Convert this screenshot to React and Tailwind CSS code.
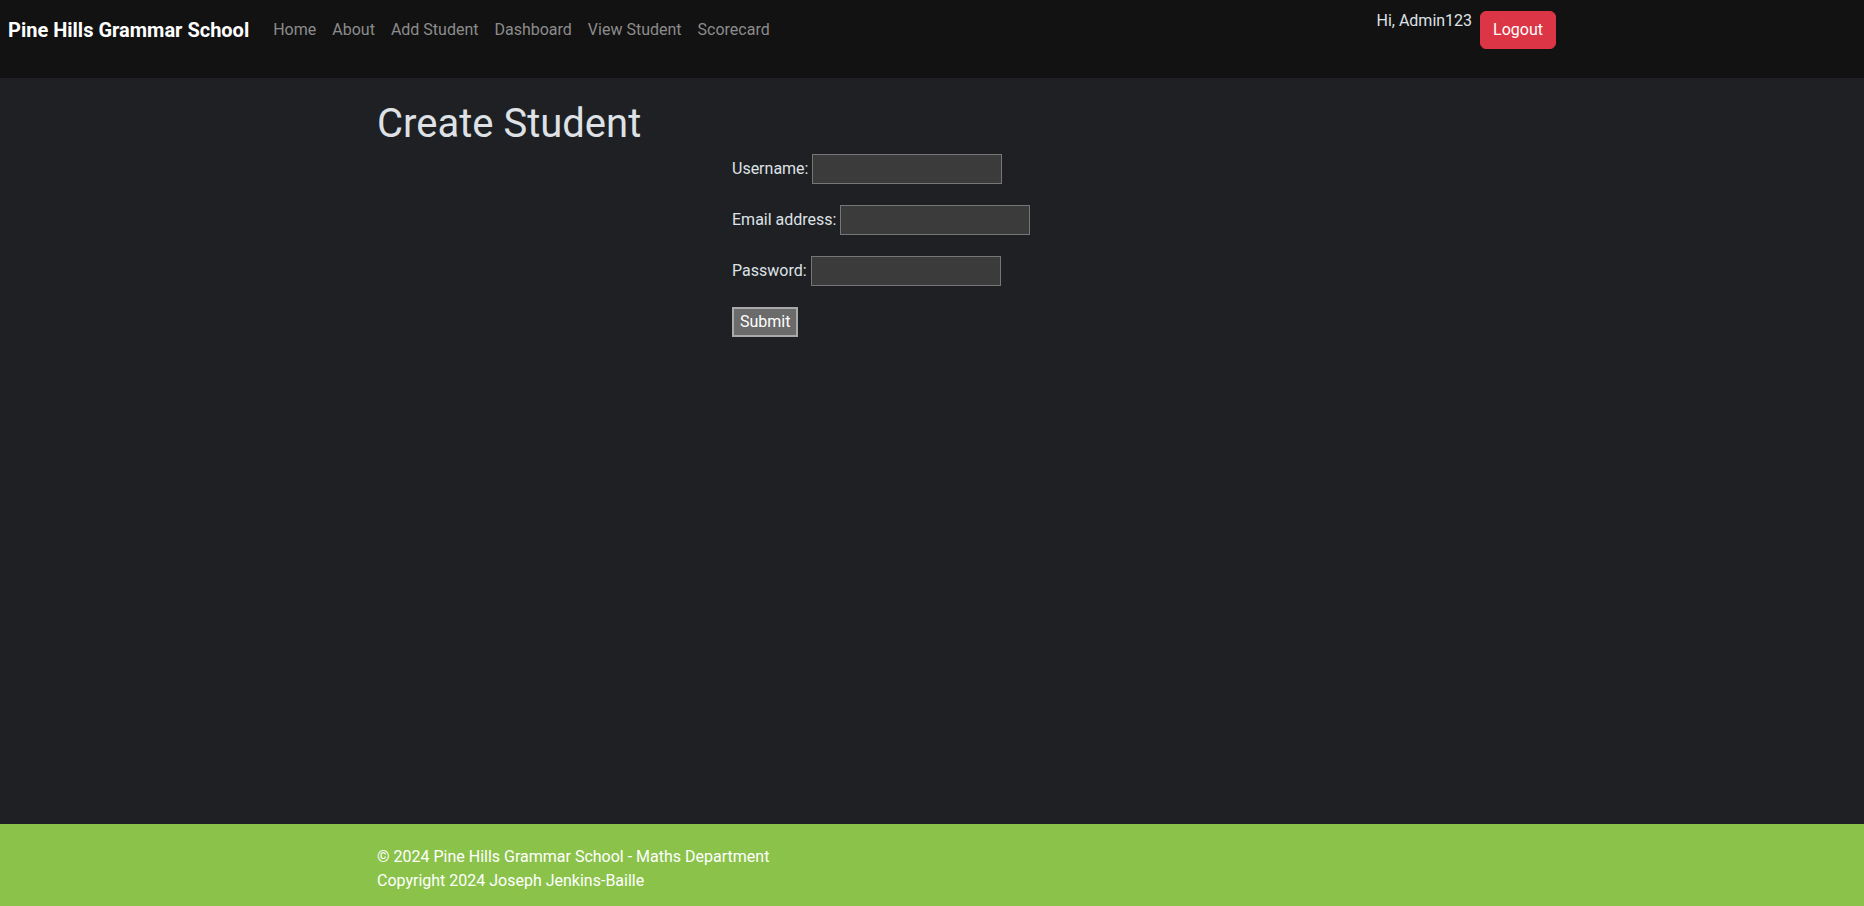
import { useState } from 'react'

const navLinks = ['Home', 'About', 'Add Student', 'Dashboard', 'View Student', 'Scorecard']

const Navbar = () => (
  <nav className="flex h-[78px] items-start justify-between bg-[#121212] px-2 pt-2">
    <div className="mt-[2px] flex items-center">
      <a href="#" className="mr-4 py-[5px] text-[20px] font-bold leading-[30px] text-white">
        Pine Hills Grammar School
      </a>
      <ul className="flex">
        {navLinks.map((l) => (
          <li key={l}>
            <a href="#" className="block px-2 py-2 text-[16px] leading-6 text-[#8c8c8c] hover:text-[#bdbdbd]">
              {l}
            </a>
          </li>
        ))}
      </ul>
    </div>
    <div className="mr-[300px] flex items-start gap-2">
      <span className="mt-[1px] text-[16px] leading-6 text-[#dee2e6]">Hi, Admin123</span>
      <button
        type="button"
        className="mt-[3px] rounded-md border border-[#dc3545] bg-[#dc3545] px-3 py-1.5 text-[16px] leading-6 text-white hover:bg-[#bb2d3b]"
      >
        Logout
      </button>
    </div>
  </nav>
)

const CreateStudent = () => {
  const [form, setForm] = useState({ username: '', email: '', password: '' })

  const update = (k) => (e) => setForm({ ...form, [k]: e.target.value })

  const inputClass =
    'h-[30px] w-[190px] border border-[#767676] bg-[#3b3b3b] px-[3px] text-[16px] leading-6 text-white outline-none'

  return (
    <main className="flex-1">
      <div className="mx-auto max-w-[1140px] px-[15px] pt-[22px]">
        <h1 className="text-[40px] leading-[48px] text-[#dee2e6]">Create Student</h1>
        <div className="flex justify-center">
          <form
            className="flex w-[400px] flex-col items-start gap-[21px] pt-[6px] text-[16px] leading-6 text-[#dee2e6]"
            onSubmit={(e) => e.preventDefault()}
          >
            <div className="flex items-center gap-1">
              <label htmlFor="username">Username:</label>
              <input id="username" type="text" value={form.username} onChange={update('username')} className={inputClass} />
            </div>
            <div className="flex items-center gap-1">
              <label htmlFor="email">Email address:</label>
              <input id="email" type="email" value={form.email} onChange={update('email')} className={inputClass} />
            </div>
            <div className="flex items-center gap-1">
              <label htmlFor="password">Password:</label>
              <input id="password" type="password" value={form.password} onChange={update('password')} className={inputClass} />
            </div>
            <button
              type="submit"
              className="h-[30px] border-2 border-[#a9a9a9] bg-[#6b6b6b] px-[6px] text-[16px] leading-6 text-white"
            >
              Submit
            </button>
          </form>
        </div>
      </div>
    </main>
  )
}

const Footer = () => (
  <footer className="h-[82px] bg-[#8bc34a]">
    <div className="mx-auto max-w-[1140px] px-[15px] pt-[21px] text-[16px] leading-6 text-white">
      <p>© 2024 Pine Hills Grammar School - Maths Department</p>
      <p>Copyright 2024 Joseph Jenkins-Baille</p>
    </div>
  </footer>
)

const App = () => {
  return (
    <div className="flex min-h-screen flex-col bg-[#1f2023] font-['Roboto',sans-serif]">
      <Navbar />
      <CreateStudent />
      <Footer />
    </div>
  )
}

export default App
